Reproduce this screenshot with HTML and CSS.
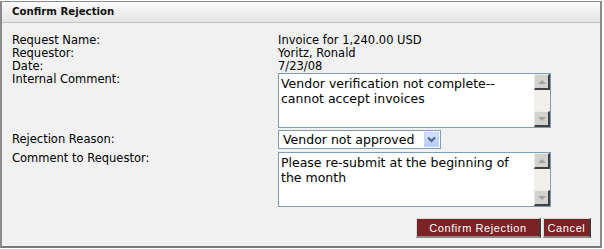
FILE: index.html
```html
<!DOCTYPE html>
<html>
<head>
<meta charset="utf-8">
<link rel="stylesheet" href="styles.css">
</head>
<body>
<div class="dialog">
  <div class="titlebar">Confirm Rejection</div>
  <div class="content">
    <div class="form">
      <div class="label">Request Name:</div>
      <div class="value">Invoice for 1,240.00 USD</div>
      <div class="label">Requestor:</div>
      <div class="value">Yoritz, Ronald</div>
      <div class="label">Date:</div>
      <div class="value">7/23/08</div>
      <div class="label">Internal Comment:</div>
      <div class="textbox">
        <div class="textbox-text">Vendor verification not complete--<br>cannot accept invoices</div>
        <div class="scrollbar">
          <div class="sb-btn"><span class="arrow-up"></span></div>
          <div class="sb-track"></div>
          <div class="sb-btn"><span class="arrow-down"></span></div>
        </div>
      </div>
      <div class="label label-select">Rejection Reason:</div>
      <div class="select-row">
        <div class="select">
          <span class="select-text">Vendor not approved</span>
          <span class="select-btn">
            <svg width="9" height="7" viewBox="0 0 9 7"><path d="M1 1.5 L4.5 5 L8 1.5" fill="none" stroke="#4d6185" stroke-width="2"/></svg>
          </span>
        </div>
      </div>
      <div class="label label-c2">Comment to Requestor:</div>
      <div class="textbox textbox-2">
        <div class="textbox-text">Please re-submit at the beginning of<br>the month</div>
        <div class="scrollbar">
          <div class="sb-btn"><span class="arrow-up"></span></div>
          <div class="sb-track"></div>
          <div class="sb-btn"><span class="arrow-down"></span></div>
        </div>
      </div>
    </div>
    <div class="buttons">
      <button class="btn btn-confirm">Confirm Rejection</button>
      <button class="btn btn-cancel">Cancel</button>
    </div>
  </div>
</div>
</body>
</html>
```

FILE: styles.css
```css
html, body {
  margin: 0;
  padding: 0;
  background: #ffffff;
}

body {
  font-family: "DejaVu Sans", Verdana, sans-serif;
  font-size: 11.5px;
  color: #000;
}

.dialog {
  margin-top: 1px;
  width: 598px;
  height: 244px;
  border-top: 1px solid #8c8c8c;
  border-left: 2px solid #8a8a8a;
  border-right: 2px solid #8a8a8a;
  border-bottom: 2px solid #7a7a7a;
  background: #f1f1f1;
  display: flex;
  flex-direction: column;
}

.titlebar {
  height: 20px;
  line-height: 20px;
  padding-left: 10px;
  font-weight: bold;
  font-size: 10.2px;
  background: linear-gradient(#fbfbfb, #e3e3e3);
  border-bottom: 1px solid #c4c4c4;
  color: #111;
}

.content {
  padding: 11px 9px 0 10px;
}

.form {
  display: grid;
  grid-template-columns: 266px 273px;
  grid-auto-rows: auto;
}

.label,
.value {
  line-height: 13px;
  white-space: nowrap;
}

.label-select {
  line-height: 19px;
  margin-top: 2px;
}

.label-c2 {
  margin-top: 3px;
}

.textbox {
  height: 53px;
  border: 1px solid #7f9db9;
  background: #fff;
  display: flex;
}

.textbox-2 {
  margin-top: 3px;
}

.textbox-text {
  flex: 1;
  padding: 2px 2px;
  font-size: 12.5px;
  line-height: 15px;
  white-space: nowrap;
}

.scrollbar {
  width: 16px;
  display: flex;
  flex-direction: column;
}

.sb-btn {
  box-sizing: border-box;
  width: 16px;
  height: 16px;
  background: #d4d2cd;
  border-top: 1px solid #ecebe8;
  border-left: 1px solid #ecebe8;
  border-right: 2px solid #404040;
  border-bottom: 2px solid #404040;
  display: flex;
  align-items: center;
  justify-content: center;
}

.sb-track {
  flex: 1;
  background: #f3f0eb;
}

.arrow-up {
  width: 0;
  height: 0;
  border-left: 4px solid transparent;
  border-right: 4px solid transparent;
  border-bottom: 4px solid #a3a3a3;
}

.arrow-down {
  width: 0;
  height: 0;
  border-left: 4px solid transparent;
  border-right: 4px solid transparent;
  border-top: 4px solid #a3a3a3;
}

.select-row {
  margin-top: 2px;
}

.select {
  box-sizing: border-box;
  width: 163px;
  height: 19px;
  border: 1px solid #7f9db9;
  background: #fff;
  display: flex;
  align-items: center;
  justify-content: space-between;
  padding: 0 1px 0 4px;
}

.select-text {
  font-size: 12.5px;
  line-height: 15px;
  white-space: nowrap;
}

.select-btn {
  width: 15px;
  height: 15px;
  box-sizing: border-box;
  background: linear-gradient(#d6e2fc, #b7cbf8);
  border: 1px solid #c3d3fd;
  display: flex;
  align-items: center;
  justify-content: center;
}

.buttons {
  margin-top: 11px;
  display: flex;
  justify-content: flex-end;
  gap: 2px;
}

.btn {
  box-sizing: border-box;
  height: 20px;
  background: #7b2224;
  color: #fff;
  font-family: "Liberation Sans", Arial, sans-serif;
  font-size: 11px;
  letter-spacing: 0.6px;
  padding: 0;
  border-top: 1px solid #d8d8d8;
  border-left: 1px solid #d8d8d8;
  border-right: 2px solid #3c3c3c;
  border-bottom: 2px solid #8a8a8a;
  cursor: pointer;
}

.btn-confirm {
  width: 125px;
}

.btn-cancel {
  width: 48px;
}
```
